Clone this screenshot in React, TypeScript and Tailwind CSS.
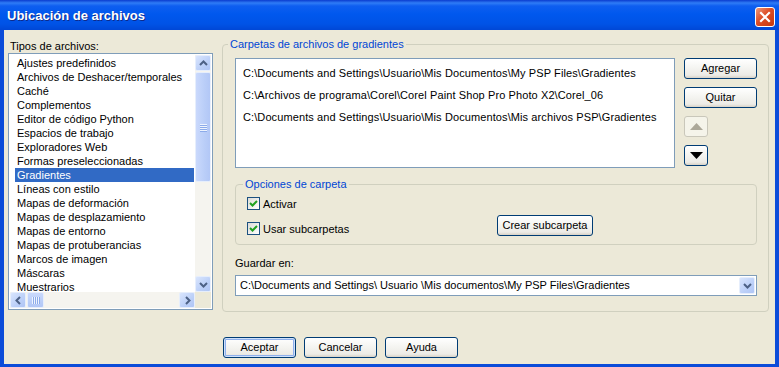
import React from 'react'

const fileTypes = [
    'Ajustes predefinidos',
    'Archivos de Deshacer/temporales',
    'Caché',
    'Complementos',
    'Editor de código Python',
    'Espacios de trabajo',
    'Exploradores Web',
    'Formas preseleccionadas',
    'Gradientes',
    'Líneas con estilo',
    'Mapas de deformación',
    'Mapas de desplazamiento',
    'Mapas de entorno',
    'Mapas de protuberancias',
    'Marcos de imagen',
    'Máscaras',
    'Muestrarios'
]

const folders = [
    'C:\\Documents and Settings\\Usuario\\Mis Documentos\\My PSP Files\\Gradientes',
    'C:\\Archivos de programa\\Corel\\Corel Paint Shop Pro Photo X2\\Corel_06',
    'C:\\Documents and Settings\\Usuario\\Mis Documentos\\Mis archivos PSP\\Gradientes'
]

function Chevron({ dir }: { dir: 'up' | 'down' | 'left' | 'right' }) {
    const points = {
        up: '1,6 4.5,2.5 8,6',
        down: '1,3 4.5,6.5 8,3',
        left: '6,1 2.5,4.5 6,8',
        right: '3,1 6.5,4.5 3,8'
    }[dir]
    return (
        <svg width="9" height="9" viewBox="0 0 9 9">
            <polyline points={points} fill="none" stroke="#4D6185" strokeWidth="2" />
        </svg>
    )
}

function ScrollButton({ dir }: { dir: 'up' | 'down' | 'left' | 'right' }) {
    return (
        <div className="w-[16px] h-[16px] shrink-0 rounded-[2px] border border-[#E6EEFC] bg-[linear-gradient(135deg,#D9E5FD,#BCD0F8_60%,#AFC5F5)] flex items-center justify-center">
            <Chevron dir={dir} />
        </div>
    )
}

function XpButton({ label, width, isDefault }: { label: string, width: string, isDefault?: boolean }) {
    return (
        <button className={`${width} h-[21px] shrink-0 rounded-[3px] border border-[#003C74] bg-[linear-gradient(to_bottom,#ffffff,#f6f6f3_40%,#ecebe6_85%,#d8d2c6)] text-[11px] text-black flex items-center justify-center ${isDefault ? 'shadow-[inset_0_0_0_1px_#CEE0FA,inset_0_0_0_2px_#8FB0EC]' : ''}`}>
            {label}
        </button>
    )
}

function Checkbox({ label }: { label: string }) {
    return (
        <div className="h-[13px] flex items-center gap-[3px]">
            <div className="w-[13px] h-[13px] border border-[#1C5180] bg-[linear-gradient(135deg,#DCDCD7,#ffffff)] flex items-center justify-center">
                <svg width="11" height="11" viewBox="0 0 11 11">
                    <polyline points="2,5 4.5,7.5 9,3" fill="none" stroke="#21A121" strokeWidth="2" />
                </svg>
            </div>
            <span className="leading-[14px]">{label}</span>
        </div>
    )
}

export default function App() {
    return (
        <div className="w-[779px] h-[367px] flex flex-col overflow-hidden font-['Liberation_Sans',Arial,sans-serif] text-[11px] text-black">
            {/* title bar */}
            <div className="h-[30px] shrink-0 flex items-start justify-between pl-[7px] pr-[4px] bg-[linear-gradient(to_bottom,#0A3CCF_0px,#2F7CF6_3px,#0E5EF0_6px,#0058EE_14px,#0053E6_24px,#0047D6_30px)]">
                <span className="mt-[8px] text-[13px] leading-[15px] font-bold text-white [text-shadow:1px_1px_0_#0F2A8A]">Ubicación de archivos</span>
                <div className="mt-[7px] w-[20px] h-[20px] rounded-[3px] border border-white bg-[linear-gradient(135deg,#EE9A7C,#DD4D25_45%,#C4380F)] flex items-center justify-center">
                    <svg width="12" height="12" viewBox="0 0 12 12">
                        <path d="M2 2 L10 10 M10 2 L2 10" stroke="white" strokeWidth="2.2" strokeLinecap="square" />
                    </svg>
                </div>
            </div>

            <div className="flex-1 flex flex-col bg-[#ECE9D8] border-x-4 border-b-[3px] border-[#0B4CD9]">
                <div className="flex pl-[4px] pt-[8px]">
                    {/* file types */}
                    <div className="w-[205px] flex flex-col">
                        <div className="pt-[2px] pl-[2px] leading-[13px]">Tipos de archivos:</div>
                        <div className="h-[257px] border border-[#7F9DB9] bg-white p-[1px] flex flex-col">
                            <div className="flex h-[237px]">
                                <div className="flex-1 pl-[5px] pt-[1px] overflow-hidden">
                                    {fileTypes.map((item) => (
                                        <div key={item} className={`w-[179px] h-[14px] leading-[14px] px-[2px] whitespace-nowrap ${item === 'Gradientes' ? 'bg-[#316AC5] text-white' : ''}`}>{item}</div>
                                    ))}
                                </div>
                                <div className="w-[16px] flex flex-col bg-[#F5F4EF]">
                                    <ScrollButton dir="up" />
                                    <div className="flex-1 pt-[1px]">
                                        <div className="h-[110px] rounded-[2px] border border-[#E6EEFC] bg-[linear-gradient(to_right,#CAD9FC,#BACEF8_60%,#B2C7F6)] flex flex-col items-center justify-center gap-[1px]">
                                            {[0, 1, 2, 3].map((i) => (
                                                <div key={i} className="w-[7px] h-[1px] bg-[#EEF4FE] shadow-[0_1px_0_#8CABEA]" />
                                            ))}
                                        </div>
                                    </div>
                                    <ScrollButton dir="down" />
                                </div>
                            </div>
                            <div className="flex h-[16px]">
                                <div className="flex-1 flex bg-[#F5F4EF]">
                                    <ScrollButton dir="left" />
                                    <div className="ml-[1px] w-[17px] h-[16px] rounded-[2px] border border-[#E6EEFC] bg-[linear-gradient(to_bottom,#CAD9FC,#BACEF8_60%,#B2C7F6)] flex items-center justify-center gap-[1px]">
                                        {[0, 1, 2, 3].map((i) => (
                                            <div key={i} className="w-[1px] h-[7px] bg-[#EEF4FE] shadow-[1px_0_0_#8CABEA]" />
                                        ))}
                                    </div>
                                    <div className="flex-1" />
                                    <ScrollButton dir="right" />
                                </div>
                                <div className="w-[16px] bg-[#ECE9D8]" />
                            </div>
                        </div>
                    </div>

                    {/* gradient folders */}
                    <fieldset className="ml-[9px] w-[547px] h-[274px] min-w-0 border border-[#D0D0BF] rounded-[4px] px-[5px]">
                        <legend className="px-[2px] leading-[13px] text-[#0046D5]">Carpetas de archivos de gradientes</legend>
                        <div className="ml-[7px] mt-[7px] flex">
                            <div className="w-[440px] h-[110px] border border-[#7F9DB9] bg-white pt-[3px]">
                                {folders.map((f) => (
                                    <div key={f} className="h-[22px] leading-[22px] pl-[7px] whitespace-nowrap tracking-[0.1px]">{f}</div>
                                ))}
                            </div>
                            <div className="ml-[9px] flex flex-col gap-[8px]">
                                <XpButton label="Agregar" width="w-[73px]" />
                                <XpButton label="Quitar" width="w-[73px]" />
                                <div className="w-[24px] h-[21px] rounded-[3px] border border-[#C9C7BA] bg-[#F5F4EA] flex items-center justify-center">
                                    <svg width="13" height="7" viewBox="0 0 13 7">
                                        <polygon points="0,7 6.5,0 13,7" fill="#ACA899" />
                                    </svg>
                                </div>
                                <div className="w-[24px] h-[21px] rounded-[3px] border border-[#003C74] bg-[linear-gradient(to_bottom,#ffffff,#f6f6f3_40%,#ecebe6_85%,#d8d2c6)] flex items-center justify-center">
                                    <svg width="13" height="7" viewBox="0 0 13 7">
                                        <polygon points="0,0 13,0 6.5,7" fill="#000000" />
                                    </svg>
                                </div>
                            </div>
                        </div>

                        <fieldset className="ml-[7px] mt-[10px] w-[522px] min-w-0 border border-[#D0D0BF] rounded-[4px] px-[7px] pb-[9px]">
                            <legend className="px-[2px] leading-[13px] text-[#0046D5]">Opciones de carpeta</legend>
                            <div className="mt-[6px] pl-[4px] flex items-end">
                                <div className="w-[250px] flex flex-col gap-[12px]">
                                    <Checkbox label="Activar" />
                                    <Checkbox label="Usar subcarpetas" />
                                </div>
                                <div className="mb-[-1px]">
                                    <XpButton label="Crear subcarpeta" width="w-[96px]" />
                                </div>
                            </div>
                        </fieldset>

                        <div className="ml-[7px] mt-[11px] leading-[14px]">Guardar en:</div>
                        <div className="ml-[7px] mt-[5px] w-[522px] h-[21px] border border-[#7F9DB9] bg-white flex items-center justify-between pl-[4px] pr-[1px]">
                            <span className="whitespace-nowrap">C:\Documents and Settings\ Usuario \Mis documentos\My PSP Files\Gradientes</span>
                            <div className="w-[16px] h-[17px] rounded-[2px] border border-[#E6EEFC] bg-[linear-gradient(135deg,#D9E5FD,#BCD0F8_60%,#AFC5F5)] flex items-center justify-center">
                                <Chevron dir="down" />
                            </div>
                        </div>
                    </fieldset>
                </div>

                <div className="flex gap-[8px] pl-[219px] mt-[25px]">
                    <XpButton label="Aceptar" width="w-[73px]" isDefault />
                    <XpButton label="Cancelar" width="w-[73px]" />
                    <XpButton label="Ayuda" width="w-[73px]" />
                </div>
            </div>
        </div>
    )
}
